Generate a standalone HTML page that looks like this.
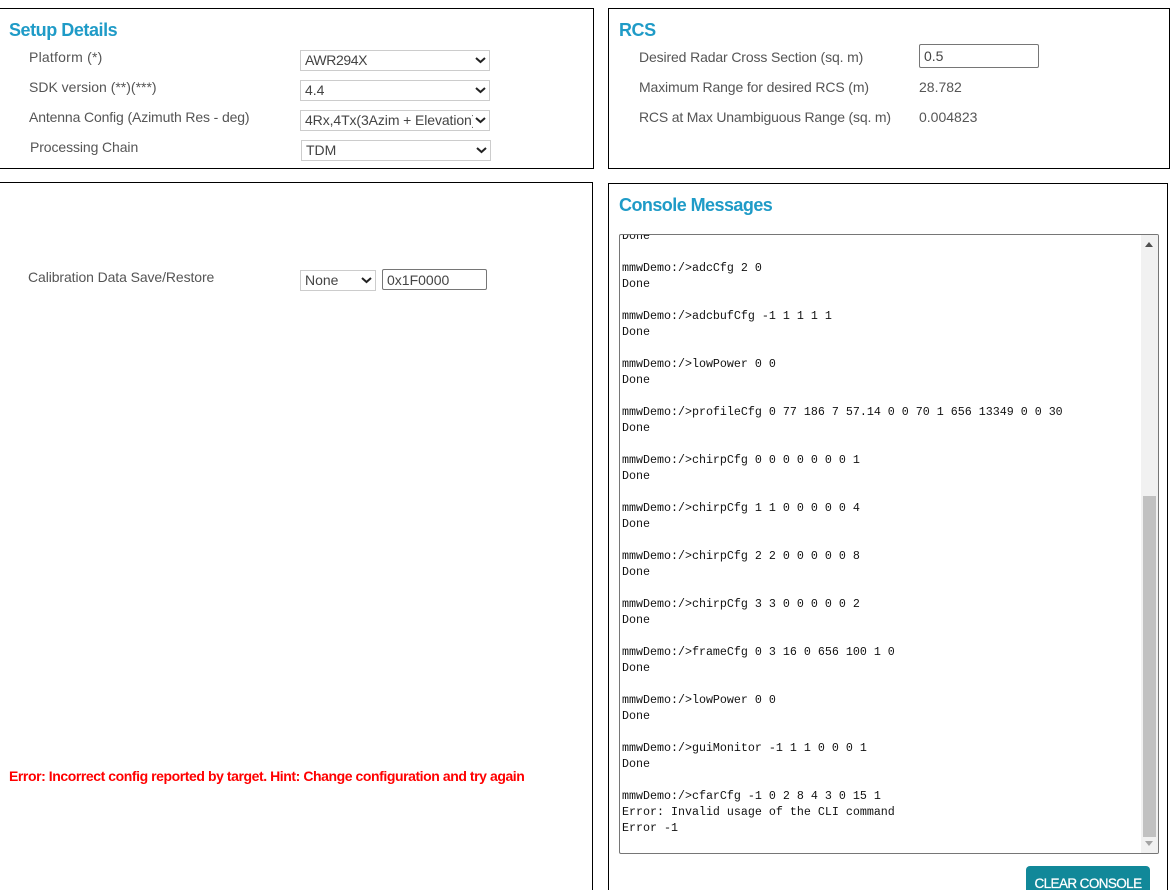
<!DOCTYPE html>
<html><head><meta charset="utf-8"><style>
html,body{margin:0;padding:0;width:1170px;height:890px;overflow:hidden;background:#fff}
body{position:relative;font-family:"Liberation Sans",sans-serif;font-size:14px;color:#555}
.box{position:absolute;border:1px solid #000;box-sizing:border-box;background:#fff}
.h{position:absolute;font-weight:bold;font-size:18px;line-height:22px;color:#1f9bc7;white-space:nowrap;letter-spacing:-.45px}
.t{position:absolute;line-height:18px;white-space:nowrap;letter-spacing:-.1px}
select,input{position:absolute;box-sizing:border-box;font-family:"Liberation Sans",sans-serif;font-size:14px;color:#444;background:#fff;margin:0}
select{border:1px solid #ccc;height:21px;padding:0 16px 0 4px;border-radius:0;appearance:none;-webkit-appearance:none;line-height:19px}
input{border:1px solid #767676;border-radius:2px;padding:1px 4px;outline:0}
#con{position:absolute;left:619px;top:234px;width:540px;height:620px;box-sizing:border-box;border:1px solid #767676;border-radius:2px;overflow:hidden;background:#fff}
#con pre{position:absolute;left:2px;top:-7px;margin:0;font-family:"Liberation Mono",monospace;font-size:11.67px;line-height:16px;color:#111}
#sb{position:absolute;right:0;top:0;width:17px;bottom:0;background:#f1f1f1}
#th{position:absolute;left:2px;width:13px;top:261px;height:341px;background:#c1c1c1}
.up{position:absolute;left:4px;top:7px;width:0;height:0;border-left:4px solid transparent;border-right:4px solid transparent;border-bottom:5px solid #505050}
.dn{position:absolute;left:4px;bottom:7px;width:0;height:0;border-left:4px solid transparent;border-right:4px solid transparent;border-top:5px solid #a3a3a3}
#btn{position:absolute;left:1026px;top:866px;width:124px;height:40px;background:#118899;border-radius:4px;color:#fff;font-size:13.5px;text-align:center;line-height:36px;letter-spacing:-.6px;-webkit-text-stroke:.25px #fff;white-space:nowrap}
svg.c{position:absolute;left:0;top:0;pointer-events:none}
</style></head><body>
<div class="box" style="left:-2px;top:8px;width:596px;height:161px"></div>
<div class="box" style="left:608px;top:8px;width:562px;height:161px"></div>
<div class="box" style="left:-2px;top:182px;width:595px;height:720px"></div>
<div class="box" style="left:608px;top:183px;width:560px;height:720px"></div>

<div class="h" style="left:9px;top:19px">Setup Details</div>
<div class="t" style="left:29px;top:48px;letter-spacing:.23px">Platform (*)</div>
<div class="t" style="left:29px;top:78px;letter-spacing:0">SDK version (**)(***)</div>
<div class="t" style="left:29px;top:108px;letter-spacing:-.13px">Antenna Config (Azimuth Res - deg)</div>
<div class="t" style="left:30px;top:138px">Processing Chain</div>
<select style="left:300px;top:50px;width:190px;letter-spacing:-.4px"><option>AWR294X</option></select>
<select style="left:300px;top:80px;width:190px"><option>4.4</option></select>
<select style="left:300px;top:110px;width:190px;letter-spacing:-.1px"><option>4Rx,4Tx(3Azim + Elevation)</option></select>
<select style="left:301px;top:140px;width:190px"><option>TDM</option></select>

<div class="h" style="left:619px;top:19px">RCS</div>
<div class="t" style="left:639px;top:48px;letter-spacing:-.13px">Desired Radar Cross Section (sq. m)</div>
<div class="t" style="left:639px;top:78px;letter-spacing:-.13px">Maximum Range for desired RCS (m)</div>
<div class="t" style="left:639px;top:108px;letter-spacing:-.18px">RCS at Max Unambiguous Range (sq. m)</div>
<input style="left:919px;top:44px;width:120px;height:24px" value="0.5">
<div class="t" style="left:919px;top:78px;letter-spacing:0">28.782</div>
<div class="t" style="left:919px;top:108px;letter-spacing:0">0.004823</div>

<div class="t" style="left:28px;top:268px">Calibration Data Save/Restore</div>
<select style="left:300px;top:270px;width:76px"><option>None</option></select>
<input style="left:382px;top:269px;width:105px;height:21px" value="0x1F0000">
<div class="t" style="left:9px;top:767px;color:#f00;font-weight:bold;letter-spacing:-.43px">Error: Incorrect config reported by target. Hint: Change configuration and try again</div>

<svg class="c" width="1170" height="890" fill="none" stroke="#222" stroke-width="2">
<path d="M476 58l4.5 4 4.500-4"/>
<path d="M476 88l4.500 4 4.500-4"/>
<path d="M476 118l4.500 4 4.500-4"/>
<path d="M477 148l4.500 4 4.500-4"/>
<path d="M362 278l4.500 4 4.500-4"/>
</svg>

<div class="h" style="left:619px;top:194px;letter-spacing:-.55px">Console Messages</div>
<div id="con"><pre>Done

mmwDemo:/&gt;adcCfg 2 0
Done

mmwDemo:/&gt;adcbufCfg -1 1 1 1 1
Done

mmwDemo:/&gt;lowPower 0 0
Done

mmwDemo:/&gt;profileCfg 0 77 186 7 57.14 0 0 70 1 656 13349 0 0 30
Done

mmwDemo:/&gt;chirpCfg 0 0 0 0 0 0 0 1
Done

mmwDemo:/&gt;chirpCfg 1 1 0 0 0 0 0 4
Done

mmwDemo:/&gt;chirpCfg 2 2 0 0 0 0 0 8
Done

mmwDemo:/&gt;chirpCfg 3 3 0 0 0 0 0 2
Done

mmwDemo:/&gt;frameCfg 0 3 16 0 656 100 1 0
Done

mmwDemo:/&gt;lowPower 0 0
Done

mmwDemo:/&gt;guiMonitor -1 1 1 0 0 0 1
Done

mmwDemo:/&gt;cfarCfg -1 0 2 8 4 3 0 15 1
Error: Invalid usage of the CLI command
Error -1</pre><div id="sb"><div class="up"></div><div id="th"></div><div class="dn"></div></div></div>
<div id="btn">CLEAR CONSOLE</div>
</body></html>
